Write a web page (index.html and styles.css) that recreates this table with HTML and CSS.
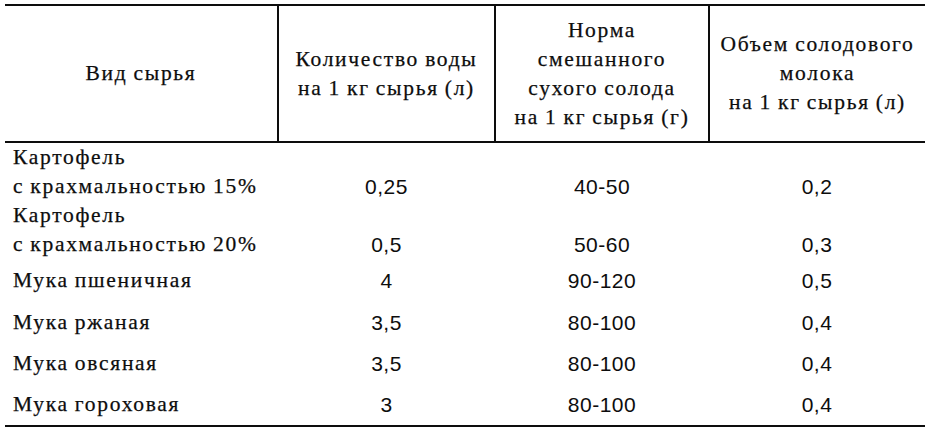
FILE: index.html
```html
<!DOCTYPE html>
<html lang="ru">
<head>
<meta charset="utf-8">
<title>Таблица</title>
<link rel="stylesheet" href="styles.css">
</head>
<body>
<table class="norms">
  <colgroup>
    <col class="c1"><col class="c2"><col class="c3"><col class="c4">
  </colgroup>
  <thead>
    <tr>
      <th>Вид сырья</th>
      <th>Количество воды<br>на 1 кг сырья (л)</th>
      <th>Норма<br>смешанного<br>сухого солода<br>на 1 кг сырья (г)</th>
      <th>Объем солодового<br>молока<br>на 1 кг сырья (л)</th>
    </tr>
  </thead>
  <tbody>
    <tr class="tall">
      <td class="name">Картофель<br>с крахмальностью 15%</td>
      <td class="num">0,25</td>
      <td class="num">40-50</td>
      <td class="num">0,2</td>
    </tr>
    <tr class="tall">
      <td class="name">Картофель<br>с крахмальностью 20%</td>
      <td class="num">0,5</td>
      <td class="num">50-60</td>
      <td class="num">0,3</td>
    </tr>
    <tr class="row first">
      <td class="name">Мука пшеничная</td>
      <td class="num">4</td>
      <td class="num">90-120</td>
      <td class="num">0,5</td>
    </tr>
    <tr class="row">
      <td class="name">Мука ржаная</td>
      <td class="num">3,5</td>
      <td class="num">80-100</td>
      <td class="num">0,4</td>
    </tr>
    <tr class="row">
      <td class="name">Мука овсяная</td>
      <td class="num">3,5</td>
      <td class="num">80-100</td>
      <td class="num">0,4</td>
    </tr>
    <tr class="row">
      <td class="name">Мука гороховая</td>
      <td class="num">3</td>
      <td class="num">80-100</td>
      <td class="num">0,4</td>
    </tr>
  </tbody>
</table>
</body>
</html>
```

FILE: styles.css
```css
html, body {
  margin: 0;
  background: #ffffff;
}
body {
  padding: 4px 5px 0 5px;
  color: #0d0d0d;
  font-family: "Liberation Serif", "Times New Roman", serif;
}
.norms {
  width: 920px;
  table-layout: fixed;
  border-collapse: collapse;
  border-top: 2px solid #0d0d0d;
  border-bottom: 2px solid #0d0d0d;
}
.c1 { width: 273px; }
.c2 { width: 217px; }
.c3 { width: 214px; }
.c4 { width: 216px; }

.norms th,
.norms td {
  padding: 0;
  font-weight: normal;
  font-size: 21.5px;
  letter-spacing: 1.7px;
  word-spacing: -1px;
  line-height: 29px;
  white-space: nowrap;
  -webkit-text-stroke: 0.25px #0d0d0d;
}

.norms th {
  height: 135px;
  text-align: center;
  vertical-align: middle;
  border-bottom: 2px solid #0d0d0d;
  border-left: 2px solid #0d0d0d;
}
.norms th:first-child { border-left: none; }

.norms td.name {
  text-align: left;
  padding-left: 8px;
}
.norms td.num {
  text-align: center;
  font-family: "Liberation Sans", Arial, sans-serif;
  font-size: 21px;
  letter-spacing: 0.5px;
  word-spacing: 0;
  -webkit-text-stroke: 0;
}
.tall td {
  height: 58px;
  vertical-align: bottom;
}
.row td {
  height: 41px;
  vertical-align: middle;
}
.row.first td {
  height: 43px;
}
```
